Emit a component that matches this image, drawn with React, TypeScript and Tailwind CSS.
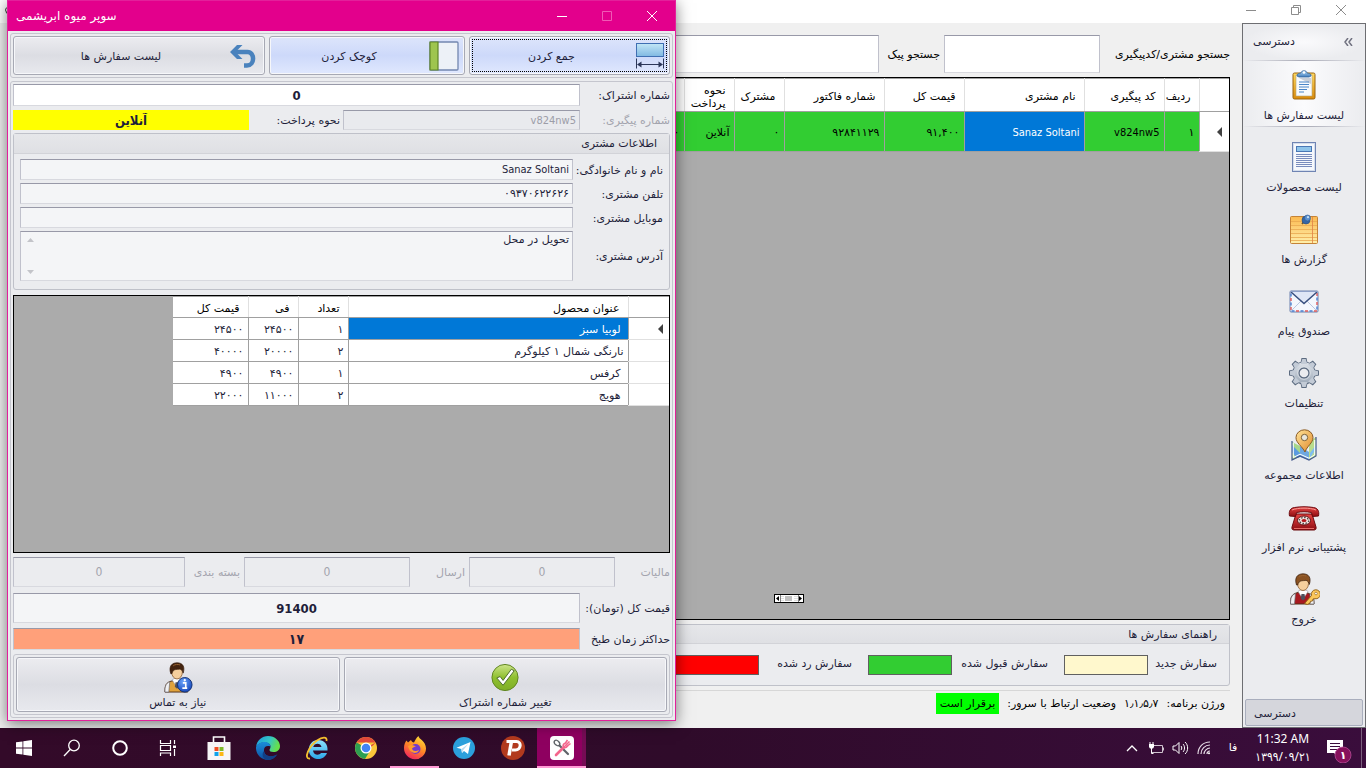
import React from "react";

type P = { className?: string };

/* ---------- sidebar and dialog icons (32 x 32 grid) ---------- */

const ClipboardIcon = ({ className = "size-8" }: P) => (
  <svg viewBox="0 0 32 32" className={className} aria-hidden="true">
    <defs>
      <linearGradient id="cb" x1="0" y1="0" x2="0" y2="1">
        <stop offset="0" stopColor="#ffd95e" />
        <stop offset="1" stopColor="#d98a0b" />
      </linearGradient>
      <linearGradient id="cbc" x1="0" y1="0" x2="0" y2="1">
        <stop offset="0" stopColor="#b9dcf7" />
        <stop offset="1" stopColor="#3f7cbc" />
      </linearGradient>
    </defs>
    <rect x="5" y="4" width="22" height="26" rx="1.5" fill="url(#cb)" stroke="#9a6410" />
    <path d="M8 6h16v21H8z" fill="#f7fafd" stroke="#b5a67a" strokeWidth=".6" />
    <path d="M11 9h12v6z" fill="#c9cfd8" />
    <path d="M11 13h10M11 15.500h10M11 18h10M11 20.500h8M11 23h5" stroke="#4a86c8" />
    <path d="M9 7c0-3 3-2.500 4-3 0-3 6-3 6 0 1 .5 4 0 4 3l-2 1H11z" fill="url(#cbc)" stroke="#33659c" strokeWidth=".8" />
    <circle cx="16" cy="3.500" r="1.200" fill="#fff" />
  </svg>
);

const ProductsIcon = ({ className = "size-8" }: P) => (
  <svg viewBox="0 0 32 32" className={className} aria-hidden="true">
    <rect x="4.500" y="1.500" width="23" height="29" fill="#f6f8fc" stroke="#6f84b3" />
    <rect x="5.500" y="2.500" width="21" height="27" fill="none" stroke="#d4ddec" />
    <rect x="8.500" y="5.500" width="15" height="5" fill="#8fc4ea" stroke="#4a78b5" />
    <path d="M8 13.500h16M8 15.500h16M8 17.500h16M8 19.500h16M8 21.500h16M8 23.500h16M8 25.500h16" stroke="#6b7fb5" strokeWidth=".9" />
  </svg>
);

const NoteIcon = ({ className = "size-8" }: P) => (
  <svg viewBox="0 0 32 32" className={className} aria-hidden="true">
    <defs>
      <linearGradient id="nt" x1="0" y1="0" x2="0" y2="1">
        <stop offset="0" stopColor="#fbb94f" />
        <stop offset="1" stopColor="#fff0ac" />
      </linearGradient>
    </defs>
    <rect x="2.500" y="3.500" width="27" height="27" rx="1" fill="url(#nt)" stroke="#c58337" />
    <path d="M3 8.500h26M3 12.500h26M3 16.500h26M3 20.500h26M3 24.500h26M3 27.500h26" stroke="#e9a850" strokeWidth=".8" />
    <path d="M24.500 4v26" stroke="#e08048" strokeWidth=".8" />
    <path d="M14 11l3-4" stroke="#6a5430" strokeWidth="1.500" />
    <circle cx="18" cy="7" r="4" fill="#3566a5" stroke="#244a80" strokeWidth=".6" />
    <circle cx="19.500" cy="5" r="3" fill="#5b90cd" stroke="#2c5791" strokeWidth=".6" />
    <circle cx="20" cy="4.200" r="1.100" fill="#c5def6" />
  </svg>
);

const MailIcon = ({ className = "size-8" }: P) => (
  <svg viewBox="0 0 32 32" className={className} aria-hidden="true">
    <rect x="2" y="6" width="28" height="21" rx="1" fill="#f4f7fd" stroke="#6b80ad" strokeWidth="1" />
    <rect x="3" y="7" width="26" height="19" fill="none" stroke="#e05a5a" strokeWidth="1.400" strokeDasharray="3 6" />
    <rect x="3" y="7" width="26" height="19" fill="none" stroke="#4a7fd0" strokeWidth="1.400" strokeDasharray="3 6" strokeDashoffset="4.500" />
    <path d="M2.500 6.500h27L16 19z" fill="#dfe6f6" />
    <path d="M4 25l9-9M28 25l-9-9" stroke="#b9c5e0" />
    <path d="M3 7l13 11.500L29 7" fill="none" stroke="#39507f" strokeWidth="1.500" />
    <path d="M2.500 6.500h27" stroke="#8ea0c8" />
  </svg>
);

const teeth = [0, 45, 90, 135, 180, 225, 270, 315];
const GearIcon = ({ className = "size-8" }: P) => (
  <svg viewBox="0 0 32 32" className={className} aria-hidden="true">
    <defs>
      <linearGradient id="gr" x1="0" y1="0" x2="0" y2="32" gradientUnits="userSpaceOnUse">
        <stop offset="0" stopColor="#eef1f5" />
        <stop offset="1" stopColor="#8e9cad" />
      </linearGradient>
    </defs>
    <g fill="none" stroke="#5c6b80" strokeWidth="2">
      <circle cx="16" cy="16" r="10.500" />
      {teeth.map((t) => (
        <path key={t} d="M13.500 6l.8-4h3.400l.8 4z" transform={`rotate(${t} 16 16)`} />
      ))}
    </g>
    <g fill="#c3cbd6">
      <circle cx="16" cy="16" r="10.700" fill="url(#gr)" />
      {teeth.map((t) => (
        <path key={t} d="M12.800 7l1.500-5h3.400l1.500 5z" transform={`rotate(${t} 16 16)`} />
      ))}
    </g>
    <circle cx="16" cy="16" r="5" fill="#ebecef" stroke="#5c6b80" strokeWidth="1.300" />
    <circle cx="16" cy="16" r="6.300" fill="none" stroke="#dfe4ea" strokeWidth=".8" />
  </svg>
);

const MapIcon = ({ className = "size-8" }: P) => (
  <svg viewBox="0 0 32 32" className={className} aria-hidden="true">
    <defs>
      <linearGradient id="pin" x1="0" y1="0" x2="1" y2="1">
        <stop offset="0" stopColor="#ffe49a" />
        <stop offset="1" stopColor="#e08a2c" />
      </linearGradient>
    </defs>
    <path d="M4 13l8 4v11l-8 3z" fill="#a6d68b" />
    <path d="M12 17l9 6v8l-9-3z" fill="#6fa8e0" />
    <path d="M21 13l7-5v19l-7 4z" fill="#b9dc8d" />
    <path d="M4 16l8 8v4l-3 1-5-6z" fill="#5a9be0" />
    <path d="M22 24l6-8v4l-6 9z" fill="#7fbdf0" />
    <path d="M4 12v19l8-4 9 4 7-4V8" fill="none" stroke="#44588e" strokeWidth="1.200" />
    <path d="M5.300 14v14.500l6.700-3.300 9 4 5.700-3.200V11" fill="none" stroke="#fff" strokeWidth="1" />
    <path d="M17 23C14 17 8 14 8 8.500a8.500 7.700 0 0117 0C25 14 19 17 17 23z" fill="url(#pin)" stroke="#8a5a24" strokeWidth="1" />
    <circle cx="16.500" cy="8.500" r="3.200" fill="#e9e6dc" stroke="#7c6238" strokeWidth="1" />
  </svg>
);

const PhoneIcon = ({ className = "size-8" }: P) => (
  <svg viewBox="0 0 32 32" className={className} aria-hidden="true">
    <defs>
      <linearGradient id="ph" x1="0" y1="0" x2="0" y2="1">
        <stop offset="0" stopColor="#e84444" />
        <stop offset="1" stopColor="#8e0d12" />
      </linearGradient>
    </defs>
    <path d="M8 13h16l4 13c.5 2-.5 3-2 3H6c-1.500 0-2.500-1-2-3z" fill="url(#ph)" stroke="#6d0a0f" />
    <path d="M1.500 15c-1-5 1-8 5-8.500 6-1 13-1 19 0 4 .5 6 3.500 5 8.500l-6 .5-1-4C18 10.500 14 10.500 8.500 11.500l-1 4z" fill="url(#ph)" stroke="#6d0a0f" />
    <path d="M4 9c6-2.500 18-2.500 24 0" fill="none" stroke="#f59a94" />
    <ellipse cx="16" cy="19.500" rx="6.500" ry="4.500" fill="#f3e3e0" stroke="#5f0a0d" />
    <ellipse cx="16" cy="19.500" rx="4.700" ry="3" fill="none" stroke="#4c4040" strokeWidth="1.300" strokeDasharray="1.500 1.500" />
    <ellipse cx="16" cy="19.500" rx="2.500" ry="1.600" fill="#b3171c" />
    <path d="M6 27.500h20" stroke="#e56a66" />
  </svg>
);

const Person = ({ vest, hair = "#5b3216" }: { vest: string; hair?: string }) => (
  <>
    <path d="M2.500 31c0-7 1-10 7.500-11.500h8c6 1.500 8 4.500 8 11.500z" fill={vest} stroke="#54321a" />
    <path d="M2.500 31c0-6 1-9 5-10.500L6.500 31zM26 31c0-6-1-9-4-10.500V31z" fill="#f0f0f2" stroke="#6a6a72" strokeWidth=".7" />
    <path d="M10 18.500l5 8 5-8-2-1.500h-6z" fill="#fff" stroke="#90909a" strokeWidth=".6" />
    <path d="M13.500 21h3l.8 4.500-2.300 2-2.300-2z" fill="#50505c" />
    <ellipse cx="15" cy="10.500" rx="5.500" ry="7" fill="#f6cf9d" stroke="#8c5a2d" strokeWidth=".8" />
    <path d="M8.500 12C6 4 10 .8 15 .8 21 .8 23.500 5 21.300 11.500c-.3-2-1.300-3.500-3.300-4.200-3 .8-7-.8-8.300 4.700z" fill={hair} stroke="#351b0a" strokeWidth=".7" />
    <path d="M11 4c2-1.800 5-1.800 7-1" fill="none" stroke="#9a6533" />
  </>
);

const ExitIcon = ({ className = "size-8" }: P) => (
  <svg viewBox="0 0 32 32" className={className} aria-hidden="true">
    <Person vest="#a8191f" hair="#8a5222" />
    <path d="M16.500 30.500l7-8a4.500 4.500 0 113.500 3.200l-2 .3-.5 2-2 .3-.7 2-2.500 1.200z" fill="#fbc75a" stroke="#8a5a14" strokeWidth=".9" />
    <circle cx="28" cy="20.500" r="1.300" fill="#fff" stroke="#8a5a14" strokeWidth=".6" />
  </svg>
);

const ContactIcon = ({ className = "size-8" }: P) => (
  <svg viewBox="0 0 32 32" className={className} aria-hidden="true">
    <defs>
      <radialGradient id="inf" cx=".4" cy=".3" r=".8">
        <stop offset="0" stopColor="#6ba4fa" />
        <stop offset="1" stopColor="#0d3db5" />
      </radialGradient>
    </defs>
    <Person vest="#e0a23c" hair="#43230f" />
    <circle cx="23" cy="23.500" r="7.500" fill="url(#inf)" stroke="#123173" />
    <path d="M21 21.500h3v5.500h1.500M20.500 27h5" fill="none" stroke="#fff" strokeWidth="1.700" />
    <circle cx="23" cy="18.800" r="1.200" fill="#fff" />
  </svg>
);

const CheckIcon = ({ className = "size-8" }: P) => (
  <svg viewBox="0 0 32 32" className={className} aria-hidden="true">
    <defs>
      <linearGradient id="ck" x1="0" y1="0" x2="0" y2="1">
        <stop offset="0" stopColor="#cde48a" />
        <stop offset=".5" stopColor="#8fc02f" />
        <stop offset="1" stopColor="#7fae28" />
      </linearGradient>
    </defs>
    <circle cx="16" cy="16" r="13.500" fill="url(#ck)" stroke="#5f8420" />
    <path d="M7.500 16.500l3.500-1.500 3 4L22.500 7.500l3 1.500-11.500 15z" fill="#fff" stroke="#4c6b2c" />
  </svg>
);

const BackIcon = ({ className = "size-8" }: P) => (
  <svg viewBox="0 0 32 32" className={className} aria-hidden="true">
    <path d="M7 12h12.500c7.500 0 7.500 13.500-.5 13.500h-3" fill="none" stroke="#4a82bd" strokeWidth="4.500" />
    <path d="M14.500 5l-7 7 7 7H9L2 12l7-7z" fill="#4a82bd" />
  </svg>
);

const CollapseIcon = ({ className = "size-8" }: P) => (
  <svg viewBox="0 0 32 32" className={className} aria-hidden="true">
    <rect x="2" y="2" width="28" height="28" rx="1" fill="#edf1f7" stroke="#7387b0" strokeWidth="1.300" />
    <path d="M2 2h8v28H2z" fill="#9ec54e" stroke="#5f8527" strokeWidth="1.200" />
  </svg>
);

const WidthIcon = ({ className = "size-8" }: P) => (
  <svg viewBox="0 0 32 32" className={className} aria-hidden="true">
    <defs>
      <linearGradient id="wd" x1="0" y1="0" x2="0" y2="1">
        <stop offset="0" stopColor="#c3e7f6" />
        <stop offset="1" stopColor="#7fb8e2" />
      </linearGradient>
    </defs>
    <rect x="2.500" y="3.500" width="27" height="13" fill="url(#wd)" stroke="#3f6fb3" />
    <path d="M2.500 18.500v10M29.500 18.500v10M4 24.500h24" stroke="#2b3658" />
    <path d="M3 24.500l4.500-3v6zM29 24.500l-4.500-3v6z" fill="#2b3658" />
  </svg>
);

/* ---------- taskbar icons ---------- */

const WindowsIcon = () => (
  <svg viewBox="0 0 16 16" className="size-4" fill="#fff" aria-hidden="true">
    <path d="M0 2.300L6.500 1.400v6.200H0zM7.300 1.300L16 0v7.600H7.300zM0 8.400h6.500v6.200L0 13.700zM7.300 8.400H16V16l-8.700-1.300z" />
  </svg>
);
const SearchIcon = () => (
  <svg viewBox="0 0 18 18" className="size-[18px]" fill="none" stroke="#fff" strokeWidth="1.300" aria-hidden="true">
    <circle cx="11" cy="6.500" r="5.300" />
    <path d="M7.200 10.500L1 17" />
  </svg>
);
const CortanaIcon = () => (
  <svg viewBox="0 0 18 18" className="size-[18px]" fill="none" stroke="#fff" strokeWidth="2" aria-hidden="true">
    <circle cx="9" cy="9" r="6.800" />
  </svg>
);
const TaskViewIcon = () => (
  <svg viewBox="0 0 18 18" className="size-[18px]" fill="none" stroke="#fff" strokeWidth="1.200" aria-hidden="true">
    <path d="M1.500 1v3.500h10V1M1.500 17v-3h10v3M1.500 6.500h10v5h-10zM15.500 1v4M15.500 10v7" />
    <path d="M14 6.500h3v2.500h-3z" fill="#fff" stroke="none" />
  </svg>
);
const StoreIcon = () => (
  <svg viewBox="0 0 24 24" className="size-6" aria-hidden="true">
    <path d="M6.500 7V1h11v6" fill="none" stroke="#fff" strokeWidth="1.600" />
    <path d="M.5 6h23v18H.5z" fill="#f7f5f6" />
    <path d="M7.500 11h4v4h-4z" fill="#f04e23" />
    <path d="M12.500 11h4v4h-4z" fill="#7db928" />
    <path d="M7.500 16h4v4h-4z" fill="#10a2ea" />
    <path d="M12.500 16h4v4h-4z" fill="#fdb714" />
  </svg>
);
const EdgeIcon = () => (
  <svg viewBox="0 0 24 24" className="size-6" aria-hidden="true">
    <defs>
      <linearGradient id="ed1" x1="0" y1="0" x2="1" y2=".3">
        <stop offset="0" stopColor="#1b9de2" />
        <stop offset=".6" stopColor="#36c8c8" />
        <stop offset="1" stopColor="#66e04c" />
      </linearGradient>
      <linearGradient id="ed2" x1="0" y1="0" x2="0" y2="1">
        <stop offset="0" stopColor="#1b8fdc" />
        <stop offset="1" stopColor="#0c4ea0" />
      </linearGradient>
    </defs>
    <path d="M0 11C1 4 6 0 12 0c7 0 12 5 12 10 0 4-3 6-6.500 6-3 0-4-1-4-2s1-1.500 1-3.500c0-2.500-2.500-4-6-4-4 0-7.500 2-8.500 4.500z" fill="url(#ed1)" />
    <path d="M0 11c1.500-3.500 5-5 8.500-5 3.500 0 6 2 6 4.500-4-1.500-7 .5-6.500 4.500.5 5 6 7 12.500 4C18 22.500 15 24 12 24 5 24-.5 18 0 11z" fill="url(#ed2)" />
    <path d="M8 15c.5 5 7 7 13.500 3.300-2 3.500-5.500 5.700-9.500 5.700-5 0-7-6-4-9z" fill="#123f86" />
  </svg>
);
const IeIcon = () => (
  <svg viewBox="0 0 24 24" className="size-6" aria-hidden="true">
    <defs>
      <linearGradient id="ie" x1="0" y1="0" x2="0" y2="1">
        <stop offset="0" stopColor="#8fe4fd" />
        <stop offset="1" stopColor="#2ba6e8" />
      </linearGradient>
    </defs>
    <path
      d="M22.500 14.500H8c.3 4.500 6 5.500 8 2.500h6c-2 5-6.500 6.500-10 6-12-2-10-19 1-19 6.500 0 10 4.500 9.500 10.500zM8.200 11h8.300c-.5-4.500-7.500-4.500-8.300 0z"
      fill="url(#ie)"
      fillRule="evenodd"
    />
    <path d="M5 22.500C-2 23.500 4 10 12 4.500c5-3.500 10.500-4.500 9.500.5" fill="none" stroke="#f6c12f" strokeWidth="1.800" />
  </svg>
);
const ChromeIcon = () => (
  <svg viewBox="0 0 24 24" className="size-6" aria-hidden="true">
    <circle cx="12" cy="12" r="11" fill="#fbc73a" />
    <path d="M12 12L2.500 6.500a11 11 0 0019 0z" fill="#e24a3b" />
    <path d="M2.500 6.500a11 11 0 008.500 16.400L16.500 14 12 12z" fill="#2d9f52" />
    <path d="M2.500 6.500A11 11 0 0121.500 6.500H12z" fill="#e24a3b" />
    <circle cx="12" cy="12" r="5.500" fill="#fff" />
    <circle cx="12" cy="12" r="4.300" fill="#4285f4" />
  </svg>
);
const FirefoxIcon = () => (
  <svg viewBox="0 0 24 24" className="size-6" aria-hidden="true">
    <defs>
      <linearGradient id="ff" x1=".8" y1="0" x2=".3" y2="1">
        <stop offset="0" stopColor="#ffe23b" />
        <stop offset=".5" stopColor="#ff8a25" />
        <stop offset="1" stopColor="#f0225f" />
      </linearGradient>
    </defs>
    <path d="M1 12c0-3 1-6 2.500-7.500L5 6.500 8 4c.5 1.500 1.500 2.500 3 2.500 1.500-3 2.500-5 4.500-6.500 0 3 7.500 5 7.500 12.500a11 11 0 01-22-.5z" fill="url(#ff)" />
    <circle cx="12.500" cy="13" r="5" fill="#7139cf" />
    <path d="M5 10c3-2 6-1 8 .5-2 0-2.500 1-4 2 1 3 4 3 7 1.500-1 4-9 5-11-4z" fill="#ff9a2d" />
  </svg>
);
const TelegramIcon = () => (
  <svg viewBox="0 0 24 24" className="size-6" aria-hidden="true">
    <circle cx="12" cy="12" r="11" fill="#2ba0dc" />
    <path d="M4.500 11.800L18.500 6l-2.500 12-4-3-2 2-.7-4z" fill="#fff" />
    <path d="M9.300 13l7-5-5 6-1.300 3z" fill="#b9dcf0" />
  </svg>
);
const PsiphonIcon = () => (
  <svg viewBox="0 0 24 24" className="size-6" aria-hidden="true">
    <circle cx="12" cy="12" r="12" fill="#b23a1e" />
    <path d="M5.500 5.500h10c5.500 0 4.500 8.500-1 8.500h-3.500" fill="none" stroke="#fff" strokeWidth="3" />
    <path d="M10.500 5L8 19.500" stroke="#fff" strokeWidth="3.500" />
  </svg>
);
const CutleryIcon = () => (
  <svg viewBox="0 0 24 24" className="size-6" aria-hidden="true">
    <rect width="24" height="24" rx="4" fill="#fff" />
    <path d="M9 9l9 9" stroke="#5f6368" strokeWidth="2.200" strokeLinecap="round" />
    <ellipse cx="7" cy="7" rx="2.200" ry="3.200" transform="rotate(-45 7 7)" fill="#fff" stroke="#5f6368" strokeWidth="1.300" />
    <path d="M14 11l-8 8" stroke="#f4668c" strokeWidth="2.600" strokeLinecap="round" />
    <path d="M13 10.500c0-2 1-3 2.500-3.500l2-3M15 10l4.500-4.500M14 12c2 0 3-1 4-2.500l2.500-2" fill="none" stroke="#f4668c" strokeWidth="1.600" />
  </svg>
);

/* ---------- small shared parts ---------- */

const inset = "border border-[#c0c1cc] border-t-[#9899a8] border-b-[#d8d9df]";
const latin = "font-['DejaVu_Sans_Condensed','DejaVu_Sans',sans-serif]";
const fieldLabel = "self-center pt-[3px] whitespace-nowrap";
const headCell = "border-s border-b border-s-[#e0e0e0] border-b-[#a0a0a0] pt-[3px] pb-0 ps-2 pe-0 text-start leading-[13px] font-normal";

function MinimizeGlyph() {
  return <svg viewBox="0 0 12 12" className="size-3" fill="none" stroke="currentColor" aria-hidden="true"><path d="M1 6.500h10" /></svg>;
}
function CloseGlyph() {
  return <svg viewBox="0 0 12 12" className="size-3" fill="none" stroke="currentColor" aria-hidden="true"><path d="M1 1l10 10M11 1L1 11" /></svg>;
}
function RowPointer() {
  return <svg viewBox="0 0 5 10" className="ms-[2px] h-[10px] w-[5px]" aria-label="سطر جاری"><path d="M5 0v10L0 5z" fill="#404040" /></svg>;
}

/* ---------- main window ---------- */

const orderHeads: [string, string][] = [
  ["ردیف", "w-[35px]"],
  ["کد پیگیری", "w-[80px]"],
  ["نام مشتری", "w-[120px]"],
  ["قیمت کل", "w-[80px]"],
  ["شماره فاکتور", "w-[100px]"],
  ["مشترک", "w-[50px]"],
  ["نحوه پرداخت", "w-[50px]"],
  ["", "w-[80px]"],
];
const orderRow = ["۱", "v824nw5", "Sanaz Soltani", "۹۱,۴۰۰", "۹۲۸۴۱۱۲۹", "۰", "آنلاین", "۰"];

function Legend({ label, color }: { label: string; color: string }) {
  return (
    <div className="flex items-center justify-between ps-4">
      <span className="whitespace-nowrap">{label}</span>
      <span className={`h-5 w-[84px] border border-[#606060] ${color}`} />
    </div>
  );
}

function OrdersPane() {
  return (
    <main className="flex min-w-0 flex-1 flex-col px-3 pt-3 text-black">
      <div className="flex h-[38px] shrink-0 items-stretch">
        <label htmlFor="find-customer" className="flex w-[130px] items-center pt-[3px] whitespace-nowrap">جستجو مشتری/کدپیگیری</label>
        <input id="find-customer" className={`w-[156px] bg-white px-1 ${inset}`} />
        <label htmlFor="find-courier" className="flex w-[65px] items-center ps-1 pt-[3px] whitespace-nowrap">جستجو پیک</label>
        <input id="find-courier" className={`w-[300px] bg-white px-1 ${inset}`} />
      </div>
      <div className="mt-1 flex flex-1 flex-col justify-between overflow-hidden border border-black bg-[#ababab]">
        <table className="w-[625px] table-fixed border-collapse border-t border-[#a0a0a0]">
          <thead>
            <tr className="h-[33px] bg-white">
              <th className="w-[30px] border-b border-[#a0a0a0]" aria-label="نشانگر" />
              {orderHeads.map(([h, w], i) => (
                <th key={i} className={`${headCell} ${w}`}>{h}</th>
              ))}
            </tr>
          </thead>
          <tbody>
            <tr className="h-10 bg-[#32cd32]">
              <td className="border-b border-[#e0e0e0] bg-white p-0 ps-[5px]"><RowPointer /></td>
              {orderRow.map((c, i) => (
                <td
                  key={i}
                  className={`border-s border-b border-[#a0a0a0] p-0 ps-1 pt-[3px] whitespace-nowrap ${i === 1 || i === 2 ? latin : ""} ${i === 2 ? "bg-[#0078d7] text-white" : ""}`}
                >
                  {c}
                </td>
              ))}
            </tr>
          </tbody>
        </table>
        <svg viewBox="0 0 30 9" className="ms-[425px] mb-4 h-[9px] w-[30px]" aria-hidden="true">
          <rect x=".5" y=".5" width="29" height="8" fill="#fff" stroke="#000" />
          <path d="M7 2v5M9 2v5M21 2v5M23 2v5" stroke="#c0c0c0" strokeDasharray="1 1" />
          <rect x="11" y="2" width="7" height="5" fill="#c0c0c0" />
          <path d="M5 2v5L2 4.500zM25 2v5l3-2.500z" fill="#000" />
          <path d="M6.500 1v7M24.500 1v7" stroke="#808080" />
        </svg>
      </div>
      <section className="mt-1 shrink-0 rounded-[3px] border border-[#bfc1c9] bg-[#ebecef] text-[#1e1e3a]">
        <h2 className="h-[19px] border-b border-[#d2d3d8] bg-linear-to-b from-[#e6e7ea] to-[#dfe0e4] ps-3 leading-[19px] font-normal">راهنمای سفارش ها</h2>
        <div className="grid h-[41px] grid-cols-[165px_196px_193px] items-center">
          <div className="-ms-1"><Legend label="سفارش جدید" color="bg-[#fff8cd]" /></div>
          <Legend label="سفارش قبول شده" color="bg-[#32cd32]" />
          <Legend label="سفارش رد شده" color="bg-[#ff0000]" />
        </div>
      </section>
      <footer className="mt-1 flex h-[38px] shrink-0 items-start gap-2 border-t border-[#d7d7d7] ps-[5px] pt-[2px] leading-[21px]">
        <span>ورژن برنامه:</span>
        <span>۱٫۱٫۵٫۷</span>
        <span>وضعیت ارتباط با سرور:</span>
        <span className="bg-[#00ff00] px-1">برقرار است</span>
      </footer>
    </main>
  );
}

const navItems = [
  { label: "لیست سفارش ها", Icon: ClipboardIcon },
  { label: "لیست محصولات", Icon: ProductsIcon },
  { label: "گزارش ها", Icon: NoteIcon },
  { label: "صندوق پیام", Icon: MailIcon },
  { label: "تنظیمات", Icon: GearIcon },
  { label: "اطلاعات مجموعه", Icon: MapIcon },
  { label: "پشتیبانی نرم افزار", Icon: PhoneIcon },
  { label: "خروج", Icon: ExitIcon },
];

function Sidebar() {
  return (
    <nav className="flex w-[124px] shrink-0 flex-col border border-[#6d6e72] bg-[#ebecef] text-[#1e1e3a]">
      <div className="flex h-9 items-center justify-between bg-[radial-gradient(ellipse_at_center,#fafafc,#ebecef_70%)] ps-3 pe-[10px]">
        <button type="button" aria-label="جمع کردن نوار" className="text-[#70717f]">
          <svg viewBox="0 0 9 8" className="h-2 w-[9px]" fill="none" stroke="currentColor" strokeWidth="1.500" aria-hidden="true"><path d="M4 0L1 4l3 4M8 0L5 4l3 4" /></svg>
        </button>
        <span>دسترسی</span>
      </div>
      <ul>
        {navItems.map(({ label, Icon }, i) => (
          <li key={label} className="h-[72px]">
            <button
              type="button"
              className={`flex h-[67px] w-full flex-col items-center justify-center gap-2 pt-1 ${
                i === 0
                  ? "border-y border-[#b9bac4] bg-linear-to-r from-[#ebecef] via-[#fbfbfd] to-[#ebecef] [border-image:linear-gradient(to_right,#ebecef,#a9aab6,#ebecef)_1]"
                  : ""
              }`}
            >
              <Icon />
              <span className="leading-[14px] whitespace-nowrap">{label}</span>
            </button>
          </li>
        ))}
      </ul>
      <button type="button" className="mx-[2px] mt-auto mb-px h-[27px] rounded-[2px] border border-[#a9aebd] bg-[#d5d6dc] pe-2 pt-[3px] text-end">دسترسی</button>
    </nav>
  );
}

/* ---------- order dialog ---------- */

const toolButton = "flex items-center rounded-[3px] border border-[#a7a9b4] shadow-[inset_0_0_0_1px_#f6f7fa] text-[#1e1e3a]";
const greyFace = "bg-linear-to-b from-[#ececf0] via-[#dcdde3] to-[#e8e9ee]";
const blueFace = "bg-linear-to-b from-[#dde5fb] via-[#cdd9fa] to-[#e0e8fe]";

const lines = [
  ["لوبیا سبز", "۱", "۲۴۵۰۰", "۲۴۵۰۰"],
  ["نارنگی شمال ۱ کیلوگرم", "۲", "۲۰۰۰۰", "۴۰۰۰۰"],
  ["کرفس", "۱", "۴۹۰۰", "۴۹۰۰"],
  ["هویج", "۲", "۱۱۰۰۰", "۲۲۰۰۰"],
];

function CustomerField({ id, label, value }: { id: string; label: string; value: string }) {
  return (
    <>
      <label htmlFor={id} className={fieldLabel}>{label}</label>
      <input id={id} readOnly value={value} className={`h-[21px] min-w-0 bg-[#f4f5f7] px-[3px] ${inset} ${id === "c-name" ? latin : ""}`} />
    </>
  );
}

function OrderDialog() {
  return (
    <section
      role="dialog"
      aria-label="سوپر میوه ابریشمی"
      className="absolute top-0 left-[7px] w-[669px] border border-[#e3209b] bg-[#ebecef] text-[#1e1e3a] shadow-[0_3px_14px_rgba(0,0,0,0.5)]"
    >
      <header dir="ltr" className="flex h-[30px] items-center justify-between bg-[#e3008c] ps-2 pe-[17px] text-white">
        <h1 className="text-[12px] font-normal">سوپر میوه ابریشمی</h1>
        <div className="flex items-center gap-[34px]">
          <button type="button" aria-label="کوچک"><MinimizeGlyph /></button>
          <button type="button" aria-label="بزرگ" disabled className="text-[#f05ab5]">
            <svg viewBox="0 0 10 10" className="size-[10px]" fill="none" stroke="currentColor" aria-hidden="true"><path d="M.5.500h9v9h-9z" /></svg>
          </button>
          <button type="button" aria-label="بستن"><CloseGlyph /></button>
        </div>
      </header>

      <div className="mx-[2px] mt-[2px] flex h-[45px] gap-1 rounded-[3px] border border-[#c5c6ce] p-[2px]">
        <button type="button" className={`w-[201px] p-[2px] ${toolButton} ${blueFace}`}>
          <span className="flex h-full w-full items-center border border-dotted border-black">
            <WidthIcon />
            <span className="flex-1 pt-[3px] ps-1">جمع کردن</span>
          </span>
        </button>
        <button type="button" className={`w-[196px] ps-1 ${toolButton} ${blueFace}`}>
          <CollapseIcon />
          <span className="flex-1 pt-[3px]">کوچک کردن</span>
        </button>
        <button type="button" className={`flex-1 ps-1 ${toolButton} ${greyFace}`}>
          <BackIcon />
          <span className="flex-1 pt-[3px]">لیست سفارش ها</span>
        </button>
      </div>

      <div className="mx-[2px] mt-[3px] mb-[2px] rounded-[3px] border border-[#c5c6ce] p-[2px]">
        <div className="grid grid-cols-[90px_237px_94px_1fr] gap-y-1">
          <label htmlFor="subscription" className={fieldLabel}>شماره اشتراک:</label>
          <input id="subscription" defaultValue="0" className={`col-span-3 h-[22px] bg-white text-center text-[13px] font-bold ${latin} ${inset}`} />
          <label htmlFor="tracking" className={`text-[#a3a4ae] ${fieldLabel}`}>شماره پیگیری:</label>
          <input id="tracking" disabled value="v824nw5" className={`h-[20px] min-w-0 bg-[#e9eaee] px-[3px] text-[#9c9da8] ${latin} ${inset}`} />
          <label htmlFor="payment" className={`ps-[3px] ${fieldLabel}`}>نحوه پرداخت:</label>
          <input id="payment" readOnly value="آنلاین" className={`h-[20px] min-w-0 bg-[#ffff00] text-center text-[13px] font-bold ${latin}`} />
        </div>

        <section className="mt-[3px] rounded-[3px] border border-[#bfc1c9]">
          <h2 className="h-5 border-b border-[#d2d3d8] bg-linear-to-b from-[#e6e7ea] to-[#dfe0e4] ps-3 leading-5 font-normal">اطلاعات مشتری</h2>
          <div className="grid grid-cols-[90px_1fr] gap-y-[3px] px-[6px] pt-[5px] pb-2">
            <CustomerField id="c-name" label="نام و نام خانوادگی:" value="Sanaz Soltani" />
            <CustomerField id="c-phone" label="تلفن مشتری:" value="۰۹۳۷۰۶۲۲۶۲۶" />
            <CustomerField id="c-mobile" label="موبایل مشتری:" value="" />
            <label htmlFor="c-address" className={fieldLabel}>آدرس مشتری:</label>
            <div className={`flex h-[50px] bg-[#f4f5f7] ${inset}`}>
              <textarea id="c-address" readOnly value="تحویل در محل" className="flex-1 resize-none overflow-hidden px-[3px] leading-4" />
              <div className="flex w-[19px] flex-col items-center justify-between py-[6px]">
                <svg viewBox="0 0 7 4" className="h-1 w-[7px]" fill="#c3c4c9" aria-hidden="true"><path d="M0 4h7L3.500 0z" /></svg>
                <svg viewBox="0 0 7 4" className="h-1 w-[7px]" fill="#c3c4c9" aria-hidden="true"><path d="M0 0h7L3.500 4z" /></svg>
              </div>
            </div>
          </div>
        </section>

        <div className="mt-[5px] h-[258px] overflow-hidden border border-black bg-[#ababab]">
          <table className="w-[496px] table-fixed border-collapse border-t border-[#a0a0a0]">
            <thead>
              <tr className="h-[21px] bg-white text-black">
                <th className="w-[41px] border-b border-[#a0a0a0]" aria-label="نشانگر" />
                <th className={`w-[280px] ${headCell}`}>عنوان محصول</th>
                <th className={`w-[50px] ${headCell}`}>تعداد</th>
                <th className={`w-[50px] ${headCell}`}>فی</th>
                <th className={`w-[75px] ${headCell}`}>قیمت کل</th>
              </tr>
            </thead>
            <tbody>
              {lines.map((row, r) => (
                <tr key={r} className="h-[22px] bg-white">
                  <td className="border-b border-[#e0e0e0] p-0 ps-1">{r === 0 && <RowPointer />}</td>
                  {row.map((c, i) => (
                    <td key={i} className={`border-s border-b border-[#a0a0a0] p-0 pt-[3px] leading-4 whitespace-nowrap ${i === 0 && r !== 1 ? "ps-[7px]" : "ps-1"} ${r === 0 && i === 0 ? "bg-[#0078d7] text-white" : ""}`}>{c}</td>
                  ))}
                </tr>
              ))}
            </tbody>
          </table>
        </div>

        <div className="mt-1 grid h-[30px] grid-cols-[55px_146px_59px_166px_59px_1fr] text-[#a3a4ae]">
          <label htmlFor="tax" className={fieldLabel}>مالیات</label>
          <input id="tax" disabled value="0" className={`min-w-0 text-center text-[12px] ${latin} ${inset}`} />
          <label htmlFor="shipping" className={`ps-1 ${fieldLabel}`}>ارسال</label>
          <input id="shipping" disabled value="0" className={`min-w-0 text-center text-[12px] ${latin} ${inset}`} />
          <label htmlFor="packing" className={`ps-1 ${fieldLabel}`}>بسته بندی</label>
          <input id="packing" disabled value="0" className={`min-w-0 text-center text-[12px] ${latin} ${inset}`} />
        </div>

        <div className="mt-[6px] grid grid-cols-[90px_1fr] gap-y-[5px]">
          <label htmlFor="total" className={fieldLabel}>قیمت کل (تومان):</label>
          <input id="total" readOnly value="91400" className={`h-[30px] bg-[#f4f5f7] text-center text-[13px] font-bold ${latin} ${inset}`} />
          <label htmlFor="cook-time" className={fieldLabel}>حداکثر زمان طبخ</label>
          <input id="cook-time" readOnly value="۱۷" className={`h-[22px] bg-[#ffa07a] text-center text-[14px] font-bold ${latin} ${inset}`} />
        </div>

        <div className="mt-1 flex h-[61px] gap-1 rounded-[3px] border border-[#c5c6ce] p-[2px]">
          <button type="button" className={`flex-1 flex-col justify-center gap-[2px] pt-1 leading-4 ${toolButton} ${greyFace}`}>
            <CheckIcon />
            <span>تغییر شماره اشتراک</span>
          </button>
          <button type="button" className={`flex-1 flex-col justify-center gap-[2px] pt-1 leading-4 ${toolButton} ${greyFace}`}>
            <ContactIcon />
            <span>نیاز به تماس</span>
          </button>
        </div>
      </div>
    </section>
  );
}

/* ---------- taskbar ---------- */

const pinned = [
  { name: "Store", Icon: StoreIcon, state: "" },
  { name: "Edge", Icon: EdgeIcon, state: "" },
  { name: "Internet Explorer", Icon: IeIcon, state: "" },
  { name: "Chrome", Icon: ChromeIcon, state: "" },
  { name: "Firefox", Icon: FirefoxIcon, state: "running" },
  { name: "Telegram", Icon: TelegramIcon, state: "" },
  { name: "Psiphon", Icon: PsiphonIcon, state: "" },
  { name: "Orders", Icon: CutleryIcon, state: "active" },
];

function Taskbar() {
  return (
    <footer dir="ltr" className="flex h-10 shrink-0 bg-linear-to-r from-[#330a29] via-[#2f0b2a] to-[#3a0d3c] text-white">
      {[WindowsIcon, SearchIcon, CortanaIcon, TaskViewIcon].map((Icon, i) => (
        <button key={i} type="button" aria-label={["Start", "Search", "Cortana", "Task View"][i]} className="flex w-12 items-center justify-center">
          <Icon />
        </button>
      ))}
      <div className="ms-[2px] flex">
        {pinned.map(({ name, Icon, state }) => (
          <button
            key={name}
            type="button"
            aria-label={name}
            className={`flex w-[49px] items-center justify-center border-b-2 pt-[2px] ${
              state === "active" ? "border-[#ff9ad5] bg-[#8e0060] shadow-[inset_-4px_0_0_#760c55]" : state === "running" ? "border-[#ff9ad5]" : "border-transparent"
            }`}
          >
            <Icon />
          </button>
        ))}
      </div>
      <div className="ms-auto flex items-center">
        <button type="button" aria-label="Hidden icons" className="flex w-6 justify-center">
          <svg viewBox="0 0 12 8" className="h-2 w-3" fill="none" stroke="#fff" strokeWidth="1.300" aria-hidden="true"><path d="M1 7l5-5 5 5" /></svg>
        </button>
        <svg viewBox="0 0 16 14" className="mx-1 h-[14px] w-4" fill="none" stroke="#fff" aria-label="Battery">
          <path d="M6 4.500h8.500v7H4M15.500 6.500v3" stroke="#d0c4d0" />
          <path d="M2 1v2M5 1v2M3.500 7v5.500M3.500 12.500h2" />
          <path d="M1 3h5v3L5 7.500H2L1 6z" fill="#fff" stroke="none" />
        </svg>
        <svg viewBox="0 0 17 14" className="mx-1 h-[14px] w-[17px]" fill="none" stroke="#fff" aria-label="Volume">
          <path d="M1 5h2.500L7 1.500v11L3.500 9H1zM9 5c1 1 1 3 0 4M11 3c2 2 2 6 0 8M13 1c3.500 3 3.500 9 0 12" />
        </svg>
        <svg viewBox="0 0 14 14" className="mx-1 size-[14px]" fill="none" stroke="#e6dce6" strokeWidth="1.200" aria-label="Network">
          <path d="M1 13C1 6 6 1 13 1M4 13c0-5 4-9 9-9M7 13c0-3 3-6 6-6M10 13c0-2 1-3 3-3" />
          <circle cx="12" cy="12.300" r="1" fill="#fff" stroke="none" />
        </svg>
        <span className="w-9 text-center">فا</span>
        <div className="w-16 text-center font-['Noto_Sans','DejaVu_Sans_Condensed',sans-serif] text-[12px] leading-[18px] whitespace-nowrap">
          <div>11:32 AM</div>
          <div>۱۳۹۹/۰۹/۲۱</div>
        </div>
        <button type="button" aria-label="Notifications" className="ms-[10px] me-2 flex w-7 justify-center pt-1">
          <svg viewBox="0 0 26 26" className="size-[26px]" aria-hidden="true">
            <path d="M1 3h16v13h-5v4l-4-4H1z" fill="#fff" />
            <path d="M4 6.500h10M4 9.500h10M4 12.500h7" stroke="#3a0d3c" />
            <circle cx="17" cy="18" r="8" fill="#86105c" stroke="#b54b95" strokeWidth=".8" />
            <text x="17" y="22" textAnchor="middle" fontSize="11" fontWeight="700" fill="#fff">۱</text>
          </svg>
        </button>
        <span className="me-1 h-10 w-px bg-[#7a5f7c]" />
      </div>
    </footer>
  );
}

export default function App() {
  return (
    <div dir="rtl" lang="fa" className="flex min-h-screen flex-col overflow-hidden font-['DejaVu_Sans',sans-serif] text-[11px]">
      <div className="relative flex flex-1 flex-col bg-[#f0f0f0]">
        <header dir="ltr" className="flex h-[23px] shrink-0 items-center justify-between bg-white pe-[19px] text-[#8c8c8c]">
          <svg viewBox="0 0 10 10" className="ms-1 size-[10px]" fill="none" stroke="#444" aria-hidden="true"><circle cx="4" cy="3" r="2.500" /><path d="M2 5l4 5" /></svg>
          <div className="flex items-center gap-[33px] pb-[3px]">
            <button type="button" aria-label="کوچک کردن پنجره"><MinimizeGlyph /></button>
            <button type="button" aria-label="بازگردانی پنجره">
              <svg viewBox="0 0 12 12" className="size-3" fill="none" stroke="currentColor" aria-hidden="true"><path d="M1.500 3.500h7v7h-7zM3.500 3.500v-2h7v7h-2" /></svg>
            </button>
            <button type="button" aria-label="بستن پنجره"><CloseGlyph /></button>
          </div>
        </header>
        <div dir="ltr" className="flex flex-1">
          <div dir="rtl" className="flex min-w-0 flex-1">
            <OrdersPane />
          </div>
          <div dir="rtl" className="flex">
            <Sidebar />
          </div>
        </div>
        <OrderDialog />
      </div>
      <Taskbar />
    </div>
  );
}
